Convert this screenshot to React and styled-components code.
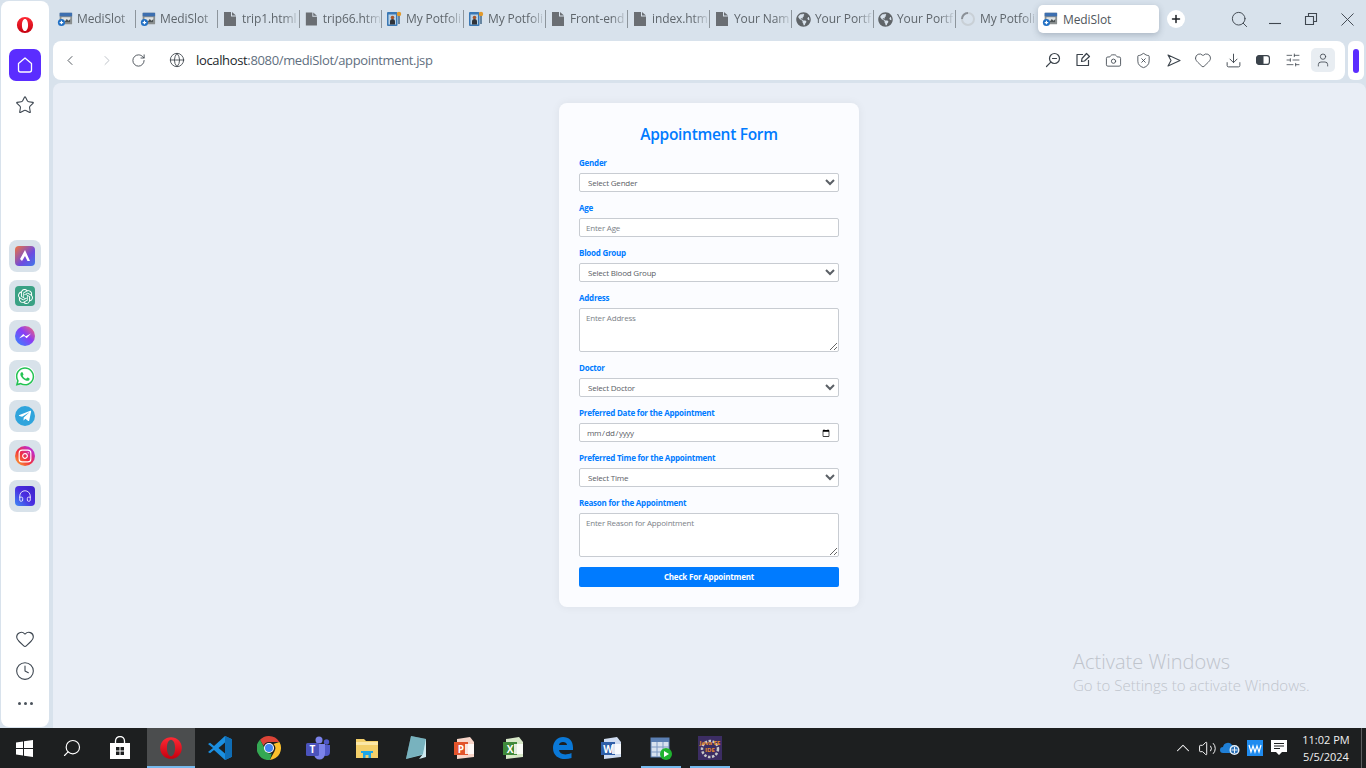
import React from 'react';
import styled, { createGlobalStyle } from 'styled-components';
import {
  Star, Heart, Clock, ChevronLeft, ChevronRight, RotateCw, Globe, Camera, ShieldX,
  Download, SlidersHorizontal, User, Search, Minus, X, Plus, SquarePen, Headphones,
  Instagram, ChevronUp, Volume2,
} from 'lucide-react';
import { FaWhatsapp, FaTelegramPlane, FaGlobeAmericas } from 'react-icons/fa';
import { SiOpenai } from 'react-icons/si';

const GlobalStyle = createGlobalStyle`
  html, body {
    margin: 0;
    padding: 0;
    width: 1366px;
    height: 768px;
    overflow: hidden;
    background: #d8e2ec;
    font-family: "Open Sans", "Noto Sans", sans-serif;
  }
`;

const Screen = styled.div`
  position: relative;
  display: flex;
  flex-direction: column;
  width: 1366px;
  height: 768px;
`;

const BrowserArea = styled.div`
  display: flex;
  height: 728px;
  background: #d8e2ec;
`;

const Sidebar = styled.aside`
  display: flex;
  flex-direction: column;
  align-items: center;
  width: 48px;
  margin: 1px 4px 1px 1px;
  padding-top: 48px;
  box-sizing: border-box;
  position: relative;
  background: #fff;
  border-radius: 8px;
`;

const SideLogo = styled.div`
  position: absolute;
  top: 15px;
  left: 15px;
  display: flex;
`;

const HomeButton = styled.div`
  display: flex;
  align-items: center;
  justify-content: center;
  width: 32px;
  height: 32px;
  border-radius: 7px;
  background: #5b2dff;
  color: #fff;
`;

const SideIcon = styled.div`
  display: flex;
  align-items: center;
  justify-content: center;
  width: 32px;
  height: 32px;
  color: #3d4650;
`;

const StarSlot = styled(SideIcon)`
  margin-top: 8px;
`;

const AppList = styled.div`
  display: flex;
  flex-direction: column;
  gap: 8px;
  margin-top: 119px;
`;

const AppTile = styled.div`
  display: flex;
  align-items: center;
  justify-content: center;
  width: 32px;
  height: 32px;
  border-radius: 8px;
  background: #d8e2ea;
`;

const AppIcon = styled.div`
  display: flex;
  align-items: center;
  justify-content: center;
  width: 20px;
  height: 20px;
  border-radius: ${(p) => (p.$round ? '50%' : '4px')};
  background: ${(p) => p.$bg};
  color: ${(p) => p.$color || '#fff'};
`;

const SideBottom = styled.div`
  display: flex;
  flex-direction: column;
  align-items: center;
  margin-top: auto;
  padding-bottom: 8px;
`;

const Dots = styled.div`
  display: flex;
  gap: 3px;
  height: 32px;
  align-items: center;

  span {
    width: 3px;
    height: 3px;
    border-radius: 50%;
    background: #4a525b;
  }
`;

const Main = styled.main`
  display: flex;
  flex-direction: column;
  flex: 1;
  min-width: 0;
`;

const TabStrip = styled.div`
  display: flex;
  align-items: center;
  height: 38px;
  margin-bottom: 3px;
  padding-right: 1px;
`;

const Tab = styled.div`
  display: flex;
  align-items: center;
  gap: 4px;
  flex: none;
  width: 81px;
  box-sizing: border-box;
  padding-left: 4px;
  overflow: hidden;
  font-size: 12px;
  line-height: 18px;
  color: #5f666c;

  &:first-child {
    width: 82px;
  }
`;

const TabLabel = styled.span`
  white-space: nowrap;
  flex: 1;
  letter-spacing: -0.1px;
  -webkit-mask-image: linear-gradient(90deg, #000 72%, rgba(0, 0, 0, 0.15) 98%);
  mask-image: linear-gradient(90deg, #000 72%, rgba(0, 0, 0, 0.15) 98%);
`;

const TabDivider = styled.div`
  flex: none;
  width: 1px;
  height: 18px;
  background: #8d959c;
`;

const ActiveTab = styled.div`
  display: flex;
  align-items: center;
  gap: 5px;
  flex: none;
  width: 121px;
  height: 28px;
  margin-left: 1px;
  padding-left: 4px;
  box-sizing: border-box;
  background: #fff;
  border-radius: 5px;
  box-shadow: 0 2px 6px rgba(60, 75, 95, 0.3);
  font-size: 12px;
  letter-spacing: -0.1px;
  color: #4f565c;
`;

const NewTab = styled.div`
  display: flex;
  align-items: center;
  justify-content: center;
  width: 18px;
  height: 18px;
  margin-left: 8px;
  border-radius: 50%;
  background: #fff;
  color: #1d2125;
`;

const WindowControls = styled.div`
  display: flex;
  margin-left: auto;
`;

const WindowButton = styled.div`
  display: flex;
  align-items: center;
  justify-content: center;
  width: 36px;
  height: 20px;
  color: #3f474f;
`;

const ToolRow = styled.div`
  display: flex;
  height: 39px;
  gap: 3px;
`;

const AddressBar = styled.div`
  display: flex;
  align-items: center;
  width: 1292px;
  box-sizing: border-box;
  padding: 0 10px 1px 9px;
  background: #fff;
  border-radius: 8px;
`;

const NavButton = styled.div`
  display: flex;
  align-items: center;
  justify-content: center;
  width: 16px;
  margin-right: ${(p) => p.$gap || 0}px;
  color: ${(p) => (p.$off ? '#b5bbc2' : '#3d444b')};
`;

const Url = styled.div`
  font-size: 13px;
  color: #5f6f80;
  letter-spacing: -0.35px;
  white-space: nowrap;

  b {
    font-weight: 400;
    color: #22272b;
  }
`;

const ToolIcons = styled.div`
  display: flex;
  align-items: center;
  margin-left: auto;
`;

const ToolIcon = styled.div`
  display: flex;
  align-items: center;
  justify-content: center;
  width: 30px;
  height: 24px;
  color: #3b434b;
`;

const ProfileButton = styled.div`
  display: flex;
  align-items: center;
  justify-content: center;
  width: 24px;
  height: 24px;
  margin-left: 3px;
  border-radius: 5px;
  background: #e8edf2;
  color: #3b434b;
`;

const SidePanel = styled.div`
  display: flex;
  align-items: center;
  justify-content: center;
  width: 16px;
  background: #fff;
  border-radius: 6px;
`;

const SidePill = styled.div`
  width: 6px;
  height: 24px;
  border-radius: 3px;
  background: #5b2dff;
`;

const Content = styled.div`
  display: flex;
  justify-content: center;
  align-items: flex-start;
  flex: 1;
  margin-top: 3px;
  padding: 20px 1px 0 0;
  background: #e9eef6;
  border-radius: 8px 8px 0 0;
`;

const Card = styled.form`
  width: 300px;
  box-sizing: border-box;
  padding: 20px;
  background: #fbfcff;
  border-radius: 8px;
  box-shadow: 0 0 10px rgba(0, 0, 0, 0.06);
`;

const Title = styled.h2`
  margin: 0 0 13px;
  font-size: 15.5px;
  line-height: 22px;
  font-weight: 600;
  letter-spacing: -0.3px;
  text-align: center;
  color: #007bff;
`;

const Field = styled.div`
  margin-bottom: 11px;

  &:last-of-type {
    margin-bottom: 10px;
  }
`;

const Label = styled.label`
  display: block;
  margin-bottom: 5px;
  font-size: 8px;
  line-height: 10px;
  font-weight: 700;
  letter-spacing: -0.24px;
  color: #007bff;
`;

const controlStyles = `
  display: block;
  width: 100%;
  box-sizing: border-box;
  border: 1px solid #c8ccd2;
  border-radius: 2px;
  background: #fff;
  font-family: "Open Sans", "Noto Sans", sans-serif;
  font-size: 8px;
  letter-spacing: -0.2px;
  outline: none;

  &::placeholder {
    color: #7c8288;
  }
`;

const Select = styled.select`
  ${controlStyles}
  height: 19px;
  padding: 0 4px;
  color: #5b6066;
`;

const Input = styled.input`
  ${controlStyles}
  height: 19px;
  padding: 0 6px;
  color: #5b6066;

  &[type='date'] {
    letter-spacing: -0.4px;
  }
`;

const TextArea = styled.textarea`
  ${controlStyles}
  height: 44px;
  padding: 3px 6px;
`;

const Submit = styled.button`
  display: block;
  width: 100%;
  height: 20px;
  padding: 0 0 2px;
  border: 0;
  border-radius: 2px;
  background: #007bff;
  color: #fff;
  font-family: "Open Sans", "Noto Sans", sans-serif;
  font-size: 8px;
  font-weight: 700;
  letter-spacing: -0.2px;
`;

const Taskbar = styled.footer`
  display: flex;
  align-items: stretch;
  height: 40px;
  background: #1d1f20;
`;

const TaskSlot = styled.div`
  display: flex;
  align-items: center;
  justify-content: center;
  flex: none;
  width: 48px;
  color: #fff;
`;

const TaskApps = styled.div`
  display: flex;
  gap: 1px;
  margin-left: 3px;
`;

const TaskApp = styled.div`
  position: relative;
  display: flex;
  align-items: center;
  justify-content: center;
  width: 48px;
  background: ${(p) => (p.$active ? '#4b4d4e' : 'transparent')};

  &::after {
    content: '';
    display: ${(p) => (p.$running ? 'block' : 'none')};
    position: absolute;
    bottom: 0;
    left: ${(p) => (p.$active ? 0 : 4)}px;
    right: ${(p) => (p.$active ? 0 : 4)}px;
    height: 2px;
    background: #76b9ed;
  }
`;

const Tray = styled.div`
  display: flex;
  align-items: stretch;
  margin-left: auto;
`;

const TrayIcon = styled.div`
  display: flex;
  align-items: center;
  justify-content: center;
  width: 24px;
  color: #fff;
`;

const TrayClock = styled.div`
  width: 60px;
  margin: 0 5px;
  padding-top: 3px;
  font-size: 11px;
  line-height: 17px;
  text-align: center;
  color: #f1f1f1;
`;

const ShowDesktop = styled.div`
  width: 1px;
  margin-right: 4px;
  background: #5c5e60;
`;

const Watermark = styled.div`
  position: absolute;
  left: 1073px;
  top: 649px;
  color: #bfc4cc;
  font-weight: 300;
  pointer-events: none;
`;

const WatermarkTitle = styled.div`
  font-size: 20px;
  line-height: 26px;
`;

const WatermarkText = styled.div`
  font-size: 15px;
  line-height: 20px;
`;

const OperaLogo = ({ size = 20 }) => (
  <svg width={size} height={size} viewBox="0 0 20 20">
    <defs>
      <linearGradient id={`op${size}`} x1="0" y1="0" x2="0" y2="1">
        <stop offset="0" stopColor="#ff2a35" />
        <stop offset="1" stopColor="#c4000f" />
      </linearGradient>
    </defs>
    <path
      fillRule="evenodd"
      fill={`url(#op${size})`}
      d="M10 1a9 9 0 1 0 0 18 9 9 0 0 0 0-18zm0 2.200c2 0 3.400 3 3.400 6.800s-1.400 6.800-3.400 6.800-3.400-3-3.400-6.800 1.400-6.800 3.400-6.800z"
    />
  </svg>
);

const HouseIcon = () => (
  <svg width="18" height="18" viewBox="0 0 18 18" fill="none" stroke="currentColor" strokeWidth="1.3" strokeLinejoin="round">
    <path d="M9 2L2.500 7.500V14a2 2 0 0 0 2 2h9a2 2 0 0 0 2-2V7.500z" />
  </svg>
);

const MediIcon = () => (
  <svg width="16" height="16" viewBox="0 0 18 18">
    <rect x="3" y="2" width="14" height="13" rx="1" fill="#8a8f8f" />
    <rect x="3" y="2" width="14" height="4" fill="#3d6fb0" />
    <rect x="5" y="7" width="10" height="6" fill="#dfe2e2" />
    <path d="M8 13l3-4 2 2 2-2v4z" fill="#4c5355" />
    <circle cx="5" cy="13" r="4" fill="#1f6fc4" />
    <path d="M5 11v4M3 13h4" stroke="#fff" strokeWidth="1.3" />
  </svg>
);

const PortfolioIcon = () => (
  <svg width="16" height="16" viewBox="0 0 16 16">
    <rect x="1" y="1" width="10.500" height="14" rx="1" fill="#3a78b5" />
    <rect x="2.500" y="3.500" width="7.500" height="10" fill="#b9d2e6" />
    <path d="M4 13.500v-3a2.500 2.500 0 0 1 5 0v3z" fill="#30343a" />
    <circle cx="6.500" cy="6.500" r="1.800" fill="#a8562a" />
    <circle cx="13" cy="3" r="2.200" fill="#e29a2d" />
    <rect x="12.200" y="5" width="1.600" height="8" fill="#4d6f8e" />
  </svg>
);

const FileIcon = () => (
  <svg width="16" height="16" viewBox="0 0 16 16">
    <path fill="#6a6e73" d="M2 1h7l0 4.500h5V15H2z" />
    <path fill="#6a6e73" d="M10 1l4 3.500h-4z" />
  </svg>
);

const Spinner = () => (
  <svg width="16" height="16" viewBox="0 0 16 16" fill="none">
    <circle cx="8" cy="8" r="6" stroke="#c9d0d6" strokeWidth="2" />
    <path d="M2 8a6 6 0 0 1 6-6" stroke="#8a9097" strokeWidth="2" />
  </svg>
);

const ZoomOutIcon = () => (
  <svg width="16" height="16" viewBox="0 0 16 16" fill="none" stroke="currentColor" strokeWidth="1.2" strokeLinecap="round">
    <circle cx="9.500" cy="6.500" r="5" />
    <path d="M5.800 10.200L1.500 14.500M7.500 6.500h4" />
  </svg>
);

const NoteIcon = () => (
  <svg width="16" height="16" viewBox="0 0 16 16" fill="none" stroke="currentColor" strokeWidth="1.2" strokeLinejoin="round">
    <path d="M8 2.500H2v11h11.500V8" />
    <path d="M11.500 1.500l3 3-5 4.500-3 .5.500-3z" />
  </svg>
);

const SendIcon = () => (
  <svg width="15" height="15" viewBox="0 0 15 15" fill="none" stroke="currentColor" strokeWidth="1.100" strokeLinejoin="round">
    <path d="M2 2L14 7.500 2 13 5 7.500z" />
  </svg>
);

const BatteryIcon = () => (
  <svg width="16" height="16" viewBox="0 0 16 16">
    <rect x="1.600" y="3.600" width="12.800" height="8.800" rx="2.500" fill="none" stroke="currentColor" strokeWidth="1.200" />
    <path d="M3.500 3.500h5v9h-5a2 2 0 0 1-2-2v-5a2 2 0 0 1 2-2z" fill="currentColor" />
  </svg>
);

const BoltIcon = () => (
  <svg width="16" height="16" viewBox="0 0 16 16">
    <path d="M2 10.500l4.200-4.500 2.500 2.300L14 5.500 9.700 10.300 7.200 8z" fill="#fff" />
  </svg>
);

const AriaMark = () => (
  <svg width="14" height="14" viewBox="0 0 14 14">
    <path d="M7 1L2 10l2 2 3-5 2.500 5H12z" fill="#fff" />
  </svg>
);

const WinLogo = () => (
  <svg width="17" height="17" viewBox="0 0 17 17" fill="#fff">
    <path d="M0 2.400L7 1.400v6.600H0zM8 1.200L17 0v8H8zM0 9h7v6.600L0 14.600zM8 9h9v8l-9-1.200z" />
  </svg>
);

const StoreIcon = () => (
  <svg width="22" height="24" viewBox="0 0 22 24">
    <path d="M6.500 7V5a4.500 4.500 0 0 1 9 0v2" fill="none" stroke="#fff" strokeWidth="1.300" />
    <path d="M1 7h20v16H1z" fill="#fff" />
    <path d="M7 11h3.500v3.500H7zM11.500 11H15v3.500h-3.500zM7 15.500h3.500V19H7zM11.500 15.500H15V19h-3.500z" fill="#1d1f20" />
  </svg>
);

const VsCodeIcon = () => (
  <svg width="26" height="26" viewBox="0 0 26 26">
    <path d="M18 1l7 3.200v17.600L18 25 7 15l-4 3.200L1 17l5-4-5-4 2-1.200L7 11z" fill="#1b8fe0" />
    <path d="M18 1l7 3.200v17.600L18 25z" fill="#0f6db5" />
    <path d="M18 7.500L11.500 13l6.500 5.500z" fill="#1d1f20" />
  </svg>
);

const ChromeIcon = () => (
  <svg width="24" height="24" viewBox="0 0 24 24">
    <path d="M12 0a12 12 0 0 1 10.400 6H12a6 6 0 0 0-5.600 3.800L3 3.800A12 12 0 0 1 12 0z" fill="#dc4437" />
    <path d="M22.400 6a12 12 0 0 1-9.600 18l4.600-8.600A6 6 0 0 0 16.500 8z" fill="#fbc02d" />
    <path d="M12.800 24A12 12 0 0 1 3 3.800L8 13a6 6 0 0 0 6.800 4.600z" fill="#34a853" />
    <circle cx="12" cy="12" r="5" fill="#fff" />
    <circle cx="12" cy="12" r="4" fill="#4285f4" />
  </svg>
);

const TeamsIcon = () => (
  <svg width="26" height="24" viewBox="0 0 26 24">
    <circle cx="14" cy="4" r="3.500" fill="#7b83eb" />
    <circle cx="21.500" cy="6" r="2.700" fill="#5059c9" />
    <path d="M17 9h8v7a4 4 0 0 1-8 0z" fill="#5059c9" />
    <path d="M8 8h12v10a5.500 5.500 0 0 1-11 0z" fill="#7b83eb" />
    <rect x="1" y="7" width="13" height="13" rx="1.500" fill="#4b53bc" />
    <text x="7.500" y="17" textAnchor="middle" fontSize="10" fontWeight="700" fill="#fff" fontFamily="Open Sans">T</text>
  </svg>
);

const ExplorerIcon = () => (
  <svg width="24" height="22" viewBox="0 0 24 22">
    <path d="M1 2h8l2 2h12v17H1z" fill="#f3cf6a" />
    <rect x="1" y="5" width="22" height="3" fill="#fbe7a6" />
    <path d="M8 21v-6h8v6h-2.500v-3h-3v3z" fill="#1ea7e8" />
    <rect x="6" y="14" width="12" height="2" fill="#1ea7e8" />
  </svg>
);

const NotebookIcon = () => (
  <svg width="24" height="26" viewBox="0 0 24 26">
    <path d="M7 1l15 3v15L2 24z" fill="#8fd0dc" />
    <path d="M7 1l15 3-3 15-17 5z" fill="#5d8f98" opacity="0.45" />
    <path d="M22 4v18l-7 2 4-5z" fill="#cfeaf0" />
  </svg>
);

const OfficeIcon = ({ tint, dark, children }) => (
  <svg width="24" height="24" viewBox="0 0 24 24">
    <path d="M4 3l13-2 4 5v15L4 23z" fill={tint} />
    <rect x="1" y="6" width="14" height="13" fill={dark} />
    <rect x="12" y="8" width="9" height="10" fill="#fff" opacity="0.85" />
    <text x="8" y="16.500" textAnchor="middle" fontSize="10" fontWeight="700" fill="#fff" fontFamily="Open Sans">{children}</text>
  </svg>
);

const EdgeIcon = () => (
  <svg width="22" height="24" viewBox="0 0 22 24">
    <path
      fill="#0a78d7"
      d="M1 12C1 5.500 5.500 1 11 1c6 0 10 4 10 10.500V14H7c.5 4 5.500 6 12.500 3v5C11 25 1 22 1 12zm6-3h8c0-4-8-4-8 0zM1 12c0-4 2.500-8 6-9.500C4 5 3 8 3 10z"
    />
  </svg>
);

const TableRunIcon = () => (
  <svg width="24" height="24" viewBox="0 0 24 24">
    <rect x="2" y="2" width="18" height="19" fill="#d8e2ef" stroke="#5b7fb3" />
    <rect x="2" y="2" width="18" height="4" fill="#5b7fb3" />
    <path d="M2 11h18M2 16h18M8 6v15M14 6v15" stroke="#7e9ac4" />
    <circle cx="17" cy="18" r="6" fill="#1fb42f" />
    <path d="M15 15l5 3-5 3z" fill="#fff" />
  </svg>
);

const JavaIdeIcon = () => (
  <svg width="24" height="24" viewBox="0 0 24 24">
    <rect width="24" height="24" fill="#3c2d63" />
    <circle cx="12" cy="13" r="8" fill="none" stroke="#c9c9c9" strokeWidth="2.500" strokeDasharray="2.500 1.500" />
    <text x="12" y="9" textAnchor="middle" fontSize="6" fontWeight="700" fill="#e98b2a" fontFamily="Open Sans">Java EE</text>
    <text x="12" y="16" textAnchor="middle" fontSize="6" fontWeight="700" fill="#e98b2a" fontFamily="Open Sans">IDE</text>
  </svg>
);

const OneDriveIcon = () => (
  <svg width="22" height="16" viewBox="0 0 22 16">
    <path d="M3 13a3 3 0 0 1 0-6 5 5 0 0 1 9-2 3.500 3.500 0 0 1 3 3v5z" fill="#1f7fd6" />
    <circle cx="14.500" cy="10" r="5" fill="#e8f1f8" />
    <circle cx="14.500" cy="10" r="3.600" fill="#2a6fb5" />
    <path d="M11.500 10h6M14.500 7v6" stroke="#e8f1f8" />
  </svg>
);

const WavesIcon = () => (
  <svg width="16" height="16" viewBox="0 0 16 16">
    <rect width="16" height="16" fill="#1f8cf0" />
    <path d="M2 5l2 7 2-6 2 6 2-6 2 6 2-7" fill="none" stroke="#fff" strokeWidth="1.200" />
  </svg>
);

const NotifyIcon = () => (
  <svg width="16" height="16" viewBox="0 0 16 16">
    <path d="M0 0h16v12h-5l-3 3-3-3H0z" fill="#fff" />
    <path d="M3 3.500h10M3 6h10M3 8.500h6" stroke="#1d1f20" />
  </svg>
);

const tabs = [
  { icon: <MediIcon />, label: 'MediSlot' },
  { icon: <MediIcon />, label: 'MediSlot' },
  { icon: <FileIcon />, label: 'trip1.html' },
  { icon: <FileIcon />, label: 'trip66.htm' },
  { icon: <PortfolioIcon />, label: 'My Potfoli' },
  { icon: <PortfolioIcon />, label: 'My Potfoli' },
  { icon: <FileIcon />, label: 'Front-end' },
  { icon: <FileIcon />, label: 'index.htm' },
  { icon: <FileIcon />, label: 'Your Nam' },
  { icon: <FaGlobeAmericas size={15} color="#5f6468" />, label: 'Your Portf' },
  { icon: <FaGlobeAmericas size={15} color="#5f6468" />, label: 'Your Portf' },
  { icon: <Spinner />, label: 'My Potfoli' },
];

const taskApps = [
  { icon: <OperaLogo size={24} />, active: true, running: true },
  { icon: <VsCodeIcon /> },
  { icon: <ChromeIcon /> },
  { icon: <TeamsIcon /> },
  { icon: <ExplorerIcon /> },
  { icon: <NotebookIcon /> },
  { icon: <OfficeIcon tint="#f8d5c8" dark="#e2542c">P</OfficeIcon> },
  { icon: <OfficeIcon tint="#d7e8c8" dark="#3f8a3a">X</OfficeIcon> },
  { icon: <EdgeIcon /> },
  { icon: <OfficeIcon tint="#cfdcf0" dark="#2f5fa8">W</OfficeIcon> },
  { icon: <TableRunIcon />, running: true },
  { icon: <JavaIdeIcon />, running: true },
];

const App = () => (
  <Screen>
    <GlobalStyle />
    <BrowserArea>
      <Sidebar>
        <SideLogo>
          <OperaLogo size={18} />
        </SideLogo>
        <HomeButton>
          <HouseIcon />
        </HomeButton>
        <StarSlot>
          <Star size={20} strokeWidth={1.3} />
        </StarSlot>
        <AppList>
          <AppTile>
            <AppIcon $bg="linear-gradient(135deg, #f0743e, #6d4be0 60%, #3f7be8)"><AriaMark /></AppIcon>
          </AppTile>
          <AppTile>
            <AppIcon $bg="#3aa184"><SiOpenai size={15} /></AppIcon>
          </AppTile>
          <AppTile>
            <AppIcon $round $bg="linear-gradient(45deg, #2d8cff, #8a3df5 55%, #ff6a6a)"><BoltIcon /></AppIcon>
          </AppTile>
          <AppTile>
            <AppIcon $round $bg="#fff" $color="#25c354"><FaWhatsapp size={21} /></AppIcon>
          </AppTile>
          <AppTile>
            <AppIcon $round $bg="#2fa4dc"><FaTelegramPlane size={14} /></AppIcon>
          </AppTile>
          <AppTile>
            <AppIcon $round $bg="linear-gradient(45deg, #fdb22c, #f0303f 45%, #c42cc4 80%)"><Instagram size={14} /></AppIcon>
          </AppTile>
          <AppTile>
            <AppIcon $bg="linear-gradient(45deg, #3f8bf5, #4a2de0 50%, #3b22c9)"><Headphones size={14} strokeWidth={1.4} /></AppIcon>
          </AppTile>
        </AppList>
        <SideBottom>
          <SideIcon><Heart size={20} strokeWidth={1.3} /></SideIcon>
          <SideIcon><Clock size={20} strokeWidth={1.3} /></SideIcon>
          <Dots><span /><span /><span /></Dots>
        </SideBottom>
      </Sidebar>
      <Main>
        <TabStrip>
          {tabs.map((tab, i) => (
            <React.Fragment key={i}>
              <Tab>
                {tab.icon}
                <TabLabel>{tab.label}</TabLabel>
              </Tab>
              {i < tabs.length - 1 && <TabDivider />}
            </React.Fragment>
          ))}
          <ActiveTab>
            <MediIcon />
            MediSlot
          </ActiveTab>
          <NewTab><Plus size={12} strokeWidth={3} /></NewTab>
          <WindowControls>
            <WindowButton><Search size={19} strokeWidth={1.2} /></WindowButton>
            <WindowButton>
              <svg width="14" height="14" viewBox="0 0 14 14" stroke="currentColor" strokeWidth="1.100">
                <path d="M1 11.500h12" />
              </svg>
            </WindowButton>
            <WindowButton>
              <svg width="14" height="14" viewBox="0 0 14 14" fill="none" stroke="currentColor" strokeWidth="1.100">
                <path d="M1.500 4.500h8v8h-8zM4.500 4.500v-3h8v8h-3" />
              </svg>
            </WindowButton>
            <WindowButton><X size={23} strokeWidth={1} /></WindowButton>
          </WindowControls>
        </TabStrip>
        <ToolRow>
          <AddressBar>
            <NavButton $gap={21}><ChevronLeft size={17} strokeWidth={1.3} /></NavButton>
            <NavButton $gap={15} $off><ChevronRight size={17} strokeWidth={1.3} /></NavButton>
            <NavButton $gap={23}><RotateCw size={15} strokeWidth={1.4} /></NavButton>
            <NavButton $gap={11}><Globe size={16} strokeWidth={1.3} /></NavButton>
            <Url><b>localhost</b>:8080/mediSlot/appointment.jsp</Url>
            <ToolIcons>
              <ToolIcon><ZoomOutIcon /></ToolIcon>
              <ToolIcon><NoteIcon /></ToolIcon>
              <ToolIcon><Camera size={17} strokeWidth={1.2} /></ToolIcon>
              <ToolIcon><ShieldX size={17} strokeWidth={1.2} /></ToolIcon>
              <ToolIcon><SendIcon /></ToolIcon>
              <ToolIcon><Heart size={18} strokeWidth={1.1} /></ToolIcon>
              <ToolIcon><Download size={17} strokeWidth={1.3} /></ToolIcon>
              <ToolIcon><BatteryIcon /></ToolIcon>
              <ToolIcon><SlidersHorizontal size={16} strokeWidth={1.2} /></ToolIcon>
              <ProfileButton><User size={16} strokeWidth={1.2} /></ProfileButton>
            </ToolIcons>
          </AddressBar>
          <SidePanel><SidePill /></SidePanel>
        </ToolRow>
        <Content>
          <Card onSubmit={(e) => e.preventDefault()}>
            <Title>Appointment Form</Title>
            <Field>
              <Label>Gender</Label>
              <Select defaultValue=""><option value="">Select Gender</option></Select>
            </Field>
            <Field>
              <Label>Age</Label>
              <Input type="text" placeholder="Enter Age" />
            </Field>
            <Field>
              <Label>Blood Group</Label>
              <Select defaultValue=""><option value="">Select Blood Group</option></Select>
            </Field>
            <Field>
              <Label>Address</Label>
              <TextArea placeholder="Enter Address" />
            </Field>
            <Field>
              <Label>Doctor</Label>
              <Select defaultValue=""><option value="">Select Doctor</option></Select>
            </Field>
            <Field>
              <Label>Preferred Date for the Appointment</Label>
              <Input type="date" />
            </Field>
            <Field>
              <Label>Preferred Time for the Appointment</Label>
              <Select defaultValue=""><option value="">Select Time</option></Select>
            </Field>
            <Field>
              <Label>Reason for the Appointment</Label>
              <TextArea placeholder="Enter Reason for Appointment" />
            </Field>
            <Submit type="submit">Check For Appointment</Submit>
          </Card>
        </Content>
      </Main>
    </BrowserArea>
    <Taskbar>
      <TaskSlot><WinLogo /></TaskSlot>
      <TaskSlot><Search size={20} strokeWidth={1.4} style={{ transform: 'scaleX(-1)' }} /></TaskSlot>
      <TaskSlot><StoreIcon /></TaskSlot>
      <TaskApps>
        {taskApps.map((app, i) => (
          <TaskApp key={i} $active={app.active} $running={app.running}>{app.icon}</TaskApp>
        ))}
      </TaskApps>
      <Tray>
        <TrayIcon><ChevronUp size={22} strokeWidth={1.1} /></TrayIcon>
        <TrayIcon><Volume2 size={19} strokeWidth={1.2} /></TrayIcon>
        <TrayIcon><OneDriveIcon /></TrayIcon>
        <TrayIcon><WavesIcon /></TrayIcon>
        <TrayIcon><NotifyIcon /></TrayIcon>
        <TrayClock>
          <div>11:02 PM</div>
          <div>5/5/2024</div>
        </TrayClock>
        <ShowDesktop />
      </Tray>
    </Taskbar>
    <Watermark>
      <WatermarkTitle>Activate Windows</WatermarkTitle>
      <WatermarkText>Go to Settings to activate Windows.</WatermarkText>
    </Watermark>
  </Screen>
);

export default App;
